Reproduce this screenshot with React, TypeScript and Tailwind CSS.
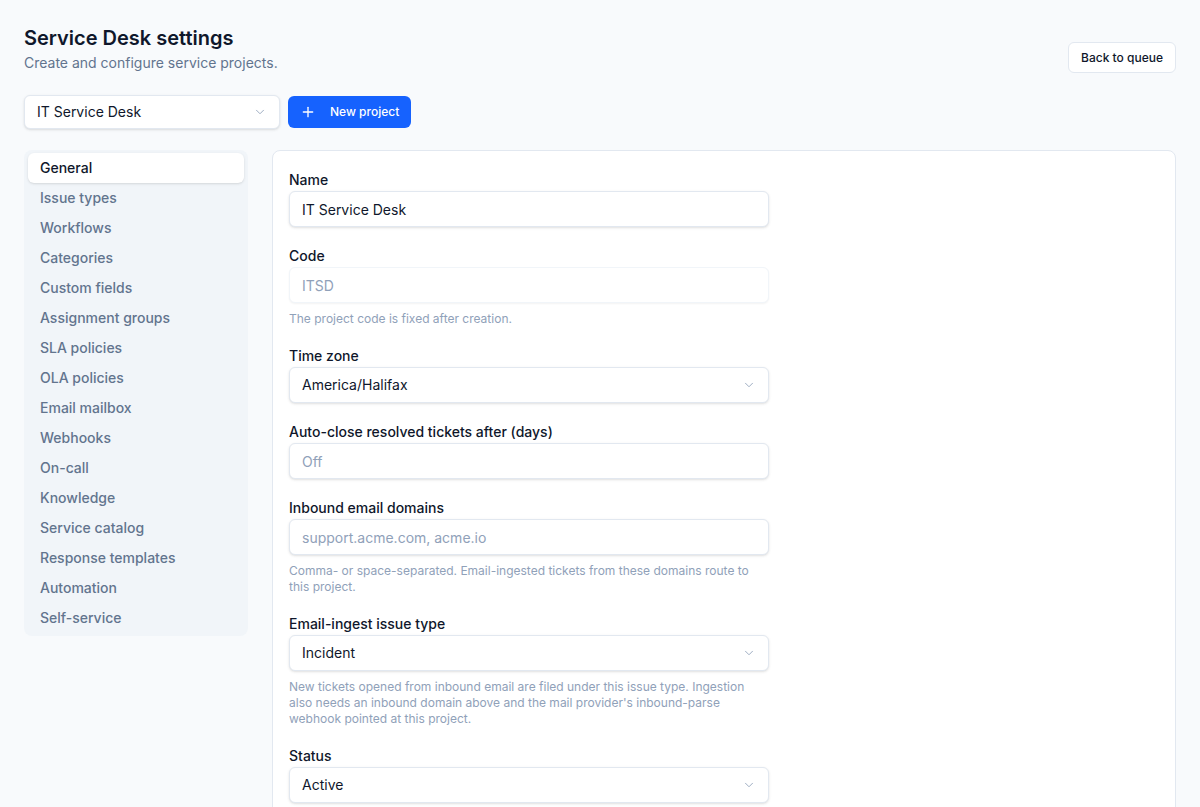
import React, { useState } from 'react';
import { ChevronDown, Plus } from 'lucide-react';

const sections = [
  'General',
  'Issue types',
  'Workflows',
  'Categories',
  'Custom fields',
  'Assignment groups',
  'SLA policies',
  'OLA policies',
  'Email mailbox',
  'Webhooks',
  'On-call',
  'Knowledge',
  'Service catalog',
  'Response templates',
  'Automation',
  'Self-service',
];

const Field = ({ label, help, children }: { label: string; help?: string; children: React.ReactNode }) => (
  <div className="flex flex-col">
    <label className="text-sm leading-5 font-medium text-slate-900">{label}</label>
    <div className="mt-px">{children}</div>
    {help && <p className="mt-2 text-xs leading-4 text-slate-400">{help}</p>}
  </div>
);

const SelectBox = ({ value, className = 'h-9 w-full' }: { value: string; className?: string }) => (
  <button
    type="button"
    className={`flex shrink-0 items-center justify-between rounded-md border border-slate-200 bg-white px-3 text-left text-sm text-slate-900 shadow-sm ${className}`}
  >
    <span>{value}</span>
    <ChevronDown size={14} strokeWidth={1.5} className="text-slate-400" />
  </button>
);

const inputClass =
  'h-9 w-full rounded-md border border-slate-200 bg-white px-3 text-sm text-slate-900 shadow-sm outline-none placeholder:text-slate-400';

const App = () => {
  const [active, setActive] = useState('General');

  return (
    <div className="min-h-screen bg-slate-50 px-6 pt-6 pb-10 font-['Inter',sans-serif]">
      {/* header */}
      <div className="flex items-end justify-between">
        <div>
          <h1 className="text-xl leading-7 font-semibold text-slate-900">Service Desk settings</h1>
          <p className="mt-px text-sm leading-5 text-slate-500">Create and configure service projects.</p>
        </div>
        <button className="h-[31px] rounded-md border border-slate-200 bg-white px-3 text-xs font-medium text-slate-900">
          Back to queue
        </button>
      </div>

      {/* project picker */}
      <div className="mt-[22px] flex items-center gap-2">
        <SelectBox value="IT Service Desk" className="h-[34px] w-64" />
        <button className="flex h-8 shrink-0 items-center gap-[14px] rounded-md bg-[#1662fe] px-3 text-xs font-medium whitespace-nowrap text-white">
          <Plus size={16} strokeWidth={2} />
          New project
        </button>
      </div>

      <div className="mt-[21px] grid grid-cols-[224px_1fr] items-start gap-6">
        {/* section nav */}
        <nav className="flex flex-col rounded-lg bg-slate-100 px-1 py-[3px]">
          {sections.map((s) => (
            <button
              key={s}
              onClick={() => setActive(s)}
              className={
                s === active
                  ? 'h-[30px] rounded-md bg-white px-3 text-left text-sm font-medium text-slate-900 shadow-sm'
                  : 'h-[30px] rounded-md px-3 text-left text-sm font-medium text-slate-500'
              }
            >
              {s}
            </button>
          ))}
        </nav>

        {/* general settings form */}
        <div className="rounded-lg border border-slate-200 bg-white px-4 pt-[19px] pb-6">
          <div className="flex max-w-[480px] flex-col gap-[19px]">
            <Field label="Name">
              <input className={inputClass} defaultValue="IT Service Desk" />
            </Field>
            <Field label="Code" help="The project code is fixed after creation.">
              <input
                className="h-9 w-full rounded-md border border-slate-100 bg-white px-3 text-sm text-slate-400 shadow-xs outline-none"
                defaultValue="ITSD"
                disabled
              />
            </Field>
            <Field label="Time zone">
              <SelectBox value="America/Halifax" />
            </Field>
            <Field label="Auto-close resolved tickets after (days)">
              <input className={inputClass} placeholder="Off" />
            </Field>
            <Field
              label="Inbound email domains"
              help="Comma- or space-separated. Email-ingested tickets from these domains route to this project."
            >
              <input className={inputClass} placeholder="support.acme.com, acme.io" />
            </Field>
            <Field
              label="Email-ingest issue type"
              help="New tickets opened from inbound email are filed under this issue type. Ingestion also needs an inbound domain above and the mail provider's inbound-parse webhook pointed at this project."
            >
              <SelectBox value="Incident" />
            </Field>
            <Field label="Status">
              <SelectBox value="Active" />
            </Field>
            <div>
              <button className="h-9 rounded-md bg-[#1662fe] px-4 text-sm font-medium text-white">Save changes</button>
            </div>
          </div>
        </div>
      </div>
    </div>
  );
};

export default App;
